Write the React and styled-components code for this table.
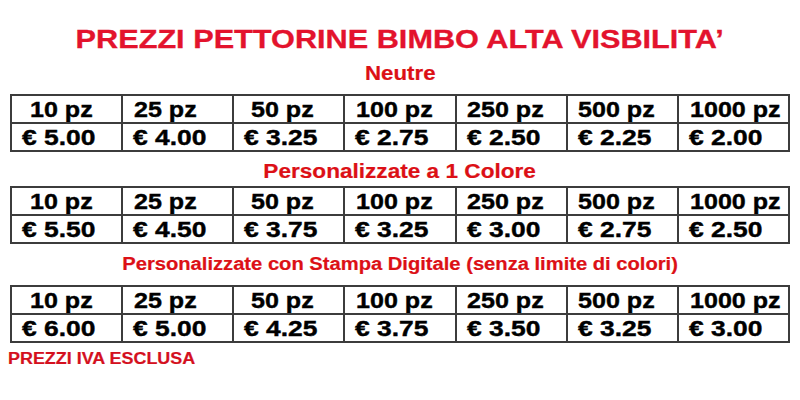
import React from "react";
import styled, { createGlobalStyle } from "styled-components";

const Global = createGlobalStyle`
  html, body { margin: 0; padding: 0; background: #ffffff; }
  body { font-family: "Liberation Sans", Arial, sans-serif; }
`;

const Page = styled.div`
  width: 800px;
  height: 400px;
  box-sizing: border-box;
  padding-top: 24px;
  display: flex;
  flex-direction: column;
`;

const Wide = styled.span`
  display: inline-block;
  transform: scaleX(${(p) => p.$sx});
  transform-origin: ${(p) => p.$origin || "center"};
  white-space: nowrap;
`;

const Title = styled.h1`
  margin: 0;
  text-align: center;
  font-size: 26px;
  line-height: 30px;
  font-weight: 700;
  color: #e3132d;
  -webkit-text-stroke: 0.3px #e3132d;
`;

const Subtitle = styled.h2`
  margin: ${(p) => p.$mt}px 0 ${(p) => p.$mb}px;
  text-align: center;
  font-size: ${(p) => p.$size}px;
  line-height: ${(p) => p.$lh}px;
  font-weight: 700;
  color: #dc1016;
  -webkit-text-stroke: 0.2px #dc1016;
`;

const Table = styled.table`
  margin-left: 10px;
  width: 780px;
  border-collapse: collapse;
  table-layout: fixed;
  border: 2px solid #4a4a4a;
`;

const Cell = styled.td`
  height: 28px;
  padding: 1px 0 0 ${(p) => p.$indent}px;
  border: 2px solid #3c3c3c;
  font-size: 22px;
  line-height: 24px;
  font-weight: 700;
  color: #000;
  -webkit-text-stroke: 0.4px #000;
  white-space: nowrap;
  overflow: hidden;
  box-sizing: border-box;
`;

const Note = styled.p`
  margin: 6px 0 0 8px;
  font-size: 16px;
  line-height: 20px;
  font-weight: 700;
  color: #d4101e;
  -webkit-text-stroke: 0.2px #d4101e;
`;

const qty = ["10 pz", "25 pz", "50 pz", "100 pz", "250 pz", "500 pz", "1000 pz"];
const qtyIndent = [18, 11, 17, 11, 10, 10, 11];

const PriceTable = ({ prices }) => (
  <Table>
    <tbody>
      <tr>
        {qty.map((q, i) => (
          <Cell key={q} $indent={qtyIndent[i]}>
            <Wide $sx={1.14} $origin="left">{q}</Wide>
          </Cell>
        ))}
      </tr>
      <tr>
        {prices.map((p, i) => (
          <Cell key={i} $indent={10}>
            <Wide $sx={1.2} $origin="left">€ {p}</Wide>
          </Cell>
        ))}
      </tr>
    </tbody>
  </Table>
);

export default function App() {
  return (
    <>
      <Global />
      <Page>
        <Title>
          <Wide $sx={1.18}>PREZZI PETTORINE BIMBO ALTA VISBILITA’</Wide>
        </Title>
        <Subtitle $size={21} $lh={26} $mt={6} $mb={8}>
          <Wide $sx={1.06}>Neutre</Wide>
        </Subtitle>
        <PriceTable prices={["5.00", "4.00", "3.25", "2.75", "2.50", "2.25", "2.00"]} />
        <Subtitle $size={20} $lh={26} $mt={6} $mb={2}>
          <Wide $sx={1.13}>Personalizzate a 1 Colore</Wide>
        </Subtitle>
        <PriceTable prices={["5.50", "4.50", "3.75", "3.25", "3.00", "2.75", "2.50"]} />
        <Subtitle $size={18} $lh={24} $mt={8} $mb={9}>
          <Wide $sx={1.12}>Personalizzate con Stampa Digitale (senza limite di colori)</Wide>
        </Subtitle>
        <PriceTable prices={["6.00", "5.00", "4.25", "3.75", "3.50", "3.25", "3.00"]} />
        <Note>
          <Wide $sx={1.12} $origin="left">PREZZI IVA ESCLUSA</Wide>
        </Note>
      </Page>
    </>
  );
}
